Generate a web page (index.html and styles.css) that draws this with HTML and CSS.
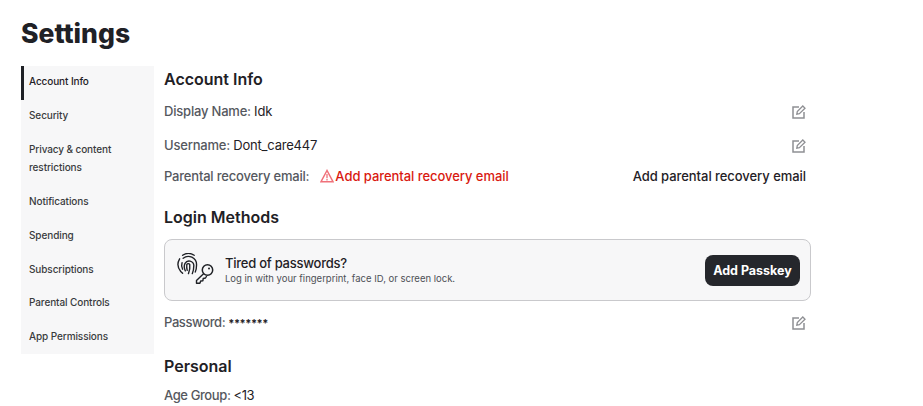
FILE: index.html
```html
<!DOCTYPE html>
<html lang="en">
<head>
    <meta charset="UTF-8">
    <title>Settings</title>
    <link rel="stylesheet" href="styles.css">
</head>
<body>
    <svg class="defs" width="0" height="0">
        <symbol id="edit" viewBox="0 0 14 14">
            <path d="M7 2H1v11h11V7" fill="none" stroke="currentColor" stroke-width="1.5"/>
            <path d="M4.8 9.2l.5-2.6L10.8 1 13 3.2 7.4 8.7z" fill="none" stroke="currentColor" stroke-width="1.3"/>
        </symbol>
    </svg>
    <div class="page">
        <h1>Settings</h1>
        <div class="layout">
            <nav class="sidebar">
                <a class="active">Account Info</a>
                <a>Security</a>
                <a class="two-line">Privacy &amp; content restrictions</a>
                <a>Notifications</a>
                <a>Spending</a>
                <a>Subscriptions</a>
                <a>Parental Controls</a>
                <a>App Permissions</a>
            </nav>
            <main class="content">
                <h2>Account Info</h2>
                <div class="row row-name">
                    <span>Display Name: <b>Idk</b></span>
                    <svg class="edit-icon"><use href="#edit"/></svg>
                </div>
                <div class="row row-user">
                    <span>Username: <b>Dont_care447</b></span>
                    <svg class="edit-icon"><use href="#edit"/></svg>
                </div>
                <div class="row row-parent">
                    <span class="parent-label">
                        <span>Parental recovery email:</span>
                        <span class="warning">
                            <svg class="warn-icon" viewBox="0 0 14 14"><path d="M7 1.5L.9 12.8h12.2z" fill="none" stroke="#f0717a" stroke-width="1.5"/><path d="M7 5v4.2M7 10v1.4" stroke="#f0717a" stroke-width="1.3"/></svg>
                            <span>Add parental recovery email</span>
                        </span>
                    </span>
                    <a class="add-link">Add parental recovery email</a>
                </div>
                <h2 class="login-title">Login Methods</h2>
                <div class="passkey-card">
                    <svg class="passkey-icon" viewBox="0 2 40 34" fill="none" stroke="#1f2126">
                        <g stroke-width="1.25" stroke-linecap="round" transform="translate(0 -1) scale(1.1)">
                            <path d="M6 4.8a9.5 9.5 0 0 1 10.5 0"/>
                            <path d="M3.3 8a10 10 0 0 0 1 11.5l1.7 1.7"/>
                            <path d="M6.5 7.5a7.5 7.5 0 0 1 12.2 5.8c0 2.5-.3 4.7-1.2 6.7"/>
                            <path d="M6 17.5a8 8 0 0 1-.5-6"/>
                            <path d="M8.5 19c-1-2-1.2-5-.3-6.8a4.3 4.3 0 0 1 8 1.800c0 2.800-.4 5-1.400 7.500"/>
                            <path d="M11.300 21.500c1-2.500 1.600-5.200 1.200-8.300a1.500 1.500 0 0 0-2.700 0c-.2 2 0 3.800.4 5.300"/>
                        </g>
                        <circle cx="31.500" cy="19" r="5.200" stroke-width="1.500"/>
                        <circle cx="33" cy="17.500" r="1" fill="#1f2126" stroke="none"/>
                        <path d="M27.800 22.500L20.500 29.500v2.800h3.400l.8-2.300 2.200-.3.300-2.200 2.300-.5 1.200-2" stroke-width="1.400" stroke-linejoin="round"/>
                    </svg>
                    <div class="passkey-text">
                        <div class="passkey-title">Tired of passwords?</div>
                        <div class="passkey-sub">Log in with your fingerprint, face ID, or screen lock.</div>
                    </div>
                    <button class="passkey-btn">Add Passkey</button>
                </div>
                <div class="row row-pass">
                    <span>Password: <b class="stars">*******</b></span>
                    <svg class="edit-icon"><use href="#edit"/></svg>
                </div>
                <h2 class="personal-title">Personal</h2>
                <div class="row row-age">
                    <span>Age Group: <b>&lt;13</b></span>
                </div>
            </main>
        </div>
    </div>
</body>
</html>
```

FILE: styles.css
```css
* { box-sizing: border-box; }
html, body { height: 406px; overflow: hidden; }
body { margin: 0; background: white; color: #1f2126; font-family: "Inter", "Noto Sans", sans-serif; }
.defs { display: block; height: 0; }
.page { padding: 15px 0 0 21px; }
h1 { margin: 0 0 15px; font-size: 26.5px; line-height: 36px; font-weight: 800; }
.layout { display: flex; gap: 10px; align-items: flex-start; }

.sidebar { width: 133px; background: #f7f7f8; display: flex; flex-direction: column; }
.sidebar a { display: block; padding: 6.5px 8px 7px 5px; font-size: 10px; line-height: 18px; letter-spacing: -0.1px; height: 33.75px; color: #393b3d; font-weight: 500; border-left: 3px solid transparent; }
.sidebar a.active { padding-top: 6px; border-left-color: #1f2126; color: #1f2126; }
.sidebar a.two-line { height: 52px; padding-right: 10px; }

.content { width: 647px; }
h2 { margin: 0; font-size: 16px; line-height: 26px; font-weight: 600; }
.row { display: flex; justify-content: space-between; align-items: center; font-size: 13px; line-height: 20px; letter-spacing: -0.2px; color: #55585e; font-weight: 500; }
.row b { color: #1f2126; font-weight: 400; }
.row .stars { font-size: 11px; font-weight: 700; letter-spacing: -0.5px; }
.row-name { margin-top: 9px; }
.row-user { margin-top: 14px; }
.row-name .edit-icon, .row-user .edit-icon { margin-top: 2px; }
.row-parent { margin-top: 11px; }
.edit-icon { width: 14px; height: 14px; margin-right: 5px; color: #8f9094; }
.parent-label { display: flex; align-items: center; }
.warning { display: flex; align-items: center; gap: 2px; color: #d9190f; letter-spacing: -0.05px; margin-left: 11px; }
.warning span { margin-left: -1px; }
.warn-icon { width: 14px; height: 14px; }
.add-link { color: #1f2126; margin-right: 5px; letter-spacing: -0.05px; }

.login-title { margin-top: 18px; }
.passkey-card { margin-top: 9px; height: 62px; border: 1px solid #c9c9cc; border-radius: 8px; background: #f7f7f8; display: flex; align-items: center; padding: 0 10px 0 11px; }
.passkey-icon { width: 40px; height: 34px; margin-right: 9px; }
.passkey-text { flex: 1; }
.passkey-title { font-size: 13px; line-height: 18px; letter-spacing: -0.25px; font-weight: 500; color: #1f2126; }
.passkey-sub { font-size: 9.5px; line-height: 14px; color: #4d5056; }
.passkey-btn { background: #25272c; color: white; border: 0; border-radius: 8px; height: 31px; width: 95px; font-family: inherit; font-size: 12.5px; font-weight: 700; padding: 0; }

.row-pass { margin-top: 11px; letter-spacing: -0.4px; }
.personal-title { margin-top: 20px; }
.row-age { margin-top: 6px; letter-spacing: -0.4px; }
```
